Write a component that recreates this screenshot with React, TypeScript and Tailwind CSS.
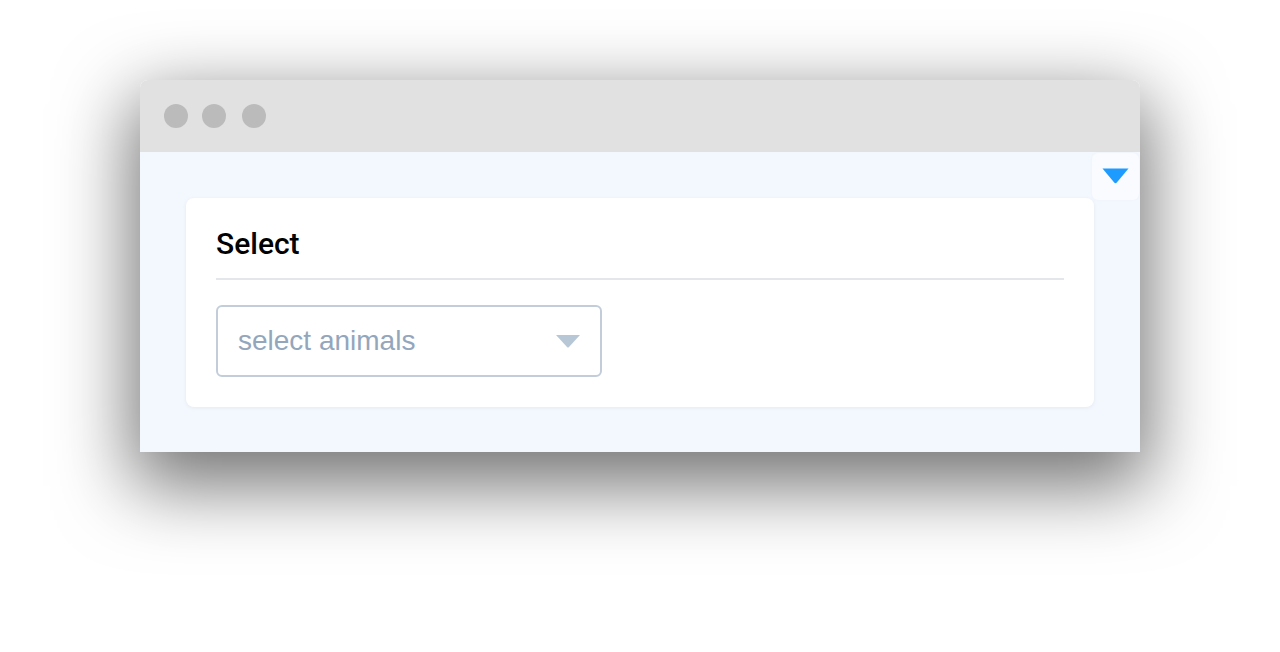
import React from 'react';

const App: React.FC = () => {
  return (
    <div className="w-[1280px] h-[652px] bg-white overflow-hidden pt-[80px] pl-[140px]">
      {/* Window */}
      <div className="w-[1000px] rounded-t-[8px] shadow-[0_26px_75px_8px_rgba(0,0,0,0.55)]">
        {/* Title bar */}
        <div className="h-[72px] bg-[#e1e1e1] rounded-t-[8px] flex items-center pl-[24px]">
          <span className="w-[24px] h-[24px] rounded-full bg-[#bbbbbb]" />
          <span className="ml-[14px] w-[24px] h-[24px] rounded-full bg-[#bbbbbb]" />
          <span className="ml-[16px] w-[24px] h-[24px] rounded-full bg-[#bbbbbb]" />
        </div>

        {/* Content */}
        <div className="relative h-[300px] bg-[#f3f7fe] px-[46px] pt-[46px]">
          <button className="absolute top-px right-px w-[47px] h-[47px] rounded-[6px] bg-[#f9fbff] shadow-[0_0_3px_rgba(0,0,0,0.03)] flex items-center justify-center">
            <svg width="27" height="16" viewBox="0 0 27 16" className="-mt-[2px]">
              <path d="M0.5 0.5 H26.5 L14.8 14.6 Q13.5 16 12.2 14.6 Z" fill="#1e9bff" />
            </svg>
          </button>

          <div className="bg-white rounded-[8px] shadow-[0_1px_4px_rgba(0,0,0,0.06)] px-[30px] pt-[31px] pb-[30px]">
            <h2 className="text-[30px] leading-[30px] font-medium text-black font-['Roboto',sans-serif]">Select</h2>
            <div className="mt-[19px] h-[2px] bg-[#e3e7ec]" />
            <div className="mt-[25px] w-[386px] h-[72px] border-2 border-[#c3cdd9] rounded-[6px] flex items-center justify-between pl-[20px] pr-[20px]">
              <span className="text-[28px] text-[#94a6bc] font-['Liberation_Sans',Arial,sans-serif]">select animals</span>
              <svg width="24" height="13" viewBox="0 0 24 13">
                <path d="M0 0 H24 L13 12 Q12 13 11 12 Z" fill="#b8c7d6" />
              </svg>
            </div>
          </div>
        </div>
      </div>
    </div>
  );
};

export default App;
